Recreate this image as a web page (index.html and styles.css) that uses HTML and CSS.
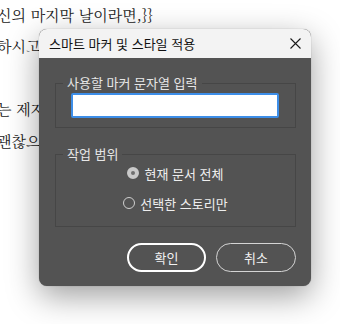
FILE: index.html
```html
<!DOCTYPE html>
<html lang="ko">
<head>
  <meta charset="UTF-8" />
  <title>스마트 마커 및 스타일 적용</title>
  <link rel="stylesheet" href="styles.css">
</head>
<body>
  <div class="doc">
    <p>신의 마지막 날이라면,}}</p>
    <p>하시고 마지막으로 인사를 드렸다.</p>
    <p>&nbsp;</p>
    <p>는 제자들에게 말씀하셨다.</p>
    <p>괜찮으시다면 함께 가자.</p>
  </div>

  <div class="dialog" role="dialog" aria-label="스마트 마커 및 스타일 적용">
    <div class="titlebar">
      <span class="title">스마트 마커 및 스타일 적용</span>
      <svg class="close" width="11" height="11" viewBox="0 0 11 11" aria-label="닫기">
        <path d="M0.5 0.5 L10.5 10.5 M10.5 0.5 L0.5 10.5" stroke="#1a1a1a" stroke-width="1.1" fill="none" />
      </svg>
    </div>
    <div class="body">
      <fieldset class="group group-input">
        <legend>사용할 마커 문자열 입력</legend>
        <input type="text" class="marker" />
      </fieldset>

      <fieldset class="group group-scope">
        <legend>작업 범위</legend>
        <label class="radio"><span class="dot checked"></span>현재 문서 전체</label>
        <label class="radio"><span class="dot"></span>선택한 스토리만</label>
      </fieldset>

      <div class="actions">
        <button class="btn primary">확인</button>
        <button class="btn">취소</button>
      </div>
    </div>
  </div>
</body>
</html>
```

FILE: styles.css
```css
/* Reset */
* {
  box-sizing: border-box;
  margin: 0;
  padding: 0;
}
body {
  width: 340px;
  height: 324px;
  overflow: hidden;
  background: #fff;
  font-family: "Noto Sans CJK KR", "Noto Sans", sans-serif;
  position: relative;
}
/* Document behind the dialog */
.doc {
  margin: -1px 0 0 -3px;
  font-family: "Noto Serif CJK KR", "Noto Sans CJK KR", serif;
  font-size: 15px;
  line-height: 31.4px;
  color: #222;
  white-space: nowrap;
}
/* Dialog */
.dialog {
  position: absolute;
  left: 39px;
  top: 29px;
  width: 272px;
  height: 257px;
  background: #535353;
  border-radius: 8px;
  box-shadow: 0 10px 32px rgba(0, 0, 0, 0.38), 0 0 1px rgba(0, 0, 0, 0.4);
  display: flex;
  flex-direction: column;
}
.titlebar {
  height: 30px;
  background: #f3f3f3;
  border-radius: 8px 8px 0 0;
  display: flex;
  align-items: center;
  justify-content: space-between;
  padding: 0 10px 0 10px;
}
.title {
  font-size: 13px;
  color: #111;
}
.body {
  padding: 17px 15px 14px 16px;
  display: flex;
  flex-direction: column;
}
.group {
  border: 1px solid #464646;
  min-width: 0;
}
.group legend {
  margin-left: 7px;
  padding: 0 4px;
  font-size: 13px;
  line-height: 16px;
  color: #e6e6e6;
}
.group-input {
  padding: 2px 15px 9px 15px;
}
.group-input legend {
  margin-left: -8px;
}
.marker {
  display: block;
  width: 208px;
  height: 25px;
  background: #fff;
  border: 2px solid #3d8ee8;
  border-radius: 2px;
  outline: none;
}
.group-scope {
  margin-top: 18px;
  padding: 1px 0 13px;
  display: flex;
  flex-direction: column;
  align-items: center;
  gap: 10px;
}
.radio {
  height: 20px;
  display: flex;
  align-items: center;
  gap: 5px;
  font-size: 13px;
  color: #eee;
}
.dot {
  width: 12px;
  height: 12px;
  border-radius: 50%;
  border: 1px solid #cfcfcf;
}
.dot.checked {
  background: #6f6f6f;
  border: 4px solid #c9c9c9;
}
.radio:first-child {
  margin-left: 2px;
}
/* Buttons */
.actions {
  margin-top: 16px;
  display: flex;
  justify-content: flex-end;
  gap: 10px;
}
.btn {
  width: 80px;
  height: 29px;
  border-radius: 15px;
  background: transparent;
  border: 1px solid #d4d4d4;
  color: #f2f2f2;
  font-family: inherit;
  font-size: 13px;
}
.btn.primary {
  border: 2px solid #fff;
  width: 79px;
}
```
